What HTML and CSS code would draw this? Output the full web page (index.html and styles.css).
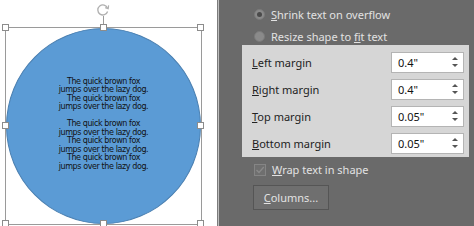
FILE: index.html
```html
<!DOCTYPE html>
<html lang="en">
<head>
  <meta charset="UTF-8">
  <title>Text box options</title>
  <link rel="stylesheet" href="styles.css">
</head>
<body>
  <div class="canvas">
    <div class="stage">
      <svg class="rotate" width="14" height="14" viewBox="0 0 14 14">
        <path d="M11.5 5.2 A5 5 0 1 0 11.6 8.5" fill="none" stroke="#b0b0b0" stroke-width="1.3"/>
        <path d="M9.2 4.6 L12.2 5.6 L12.6 2.4" fill="none" stroke="#b0b0b0" stroke-width="1.2"/>
      </svg>
      <div class="rotate-line"></div>
      <div class="frame"></div>
      <div class="shape">
        <div class="shape-text">
          <p>The quick brown fox<br>jumps over the lazy dog.<br>The quick brown fox<br>jumps over the lazy dog.</p>
          <p>The quick brown fox<br>jumps over the lazy dog.<br>The quick brown fox<br>jumps over the lazy dog.<br>The quick brown fox<br>jumps over the lazy dog.</p>
        </div>
      </div>
      <span class="handle h-tl"></span>
      <span class="handle h-tm"></span>
      <span class="handle h-tr"></span>
      <span class="handle h-ml"></span>
      <span class="handle h-mr"></span>
      <span class="handle h-bl"></span>
      <span class="handle h-bm"></span>
      <span class="handle h-br"></span>
    </div>
  </div>
  <div class="divider"></div>
  <div class="panel">
    <label class="option"><span class="radio checked"></span><span><u>S</u>hrink text on overflow</span></label>
    <label class="option"><span class="radio"></span><span>Resize shape to <u>f</u>it text</span></label>

    <div class="margins">
      <div class="row">
        <span><u>L</u>eft margin</span>
        <div class="spin"><span>0.4"</span><span class="arrows"><i class="up"></i><i class="down"></i></span></div>
      </div>
      <div class="row">
        <span><u>R</u>ight margin</span>
        <div class="spin"><span>0.4"</span><span class="arrows"><i class="up"></i><i class="down"></i></span></div>
      </div>
      <div class="row">
        <span><u>T</u>op margin</span>
        <div class="spin"><span>0.05"</span><span class="arrows"><i class="up"></i><i class="down"></i></span></div>
      </div>
      <div class="row">
        <span><u>B</u>ottom margin</span>
        <div class="spin"><span>0.05"</span><span class="arrows"><i class="up"></i><i class="down"></i></span></div>
      </div>
    </div>

    <label class="option check-row">
      <span class="checkbox">
        <svg width="10" height="10" viewBox="0 0 10 10"><path d="M1.5 5 L4 7.5 L8.8 2" fill="none" stroke="#8a8a8a" stroke-width="1.3"/></svg>
      </span>
      <span><u>W</u>rap text in shape</span>
    </label>

    <button class="columns"><u>C</u>olumns...</button>
  </div>
</body>
</html>
```

FILE: styles.css
```css
body {
  margin: 0;
  width: 474px;
  height: 226px;
  display: flex;
  overflow: hidden;
  font-family: "Segoe UI", "Noto Sans", sans-serif;
}
.canvas {
  width: 217px;
  background: #fff;
}
.stage {
  position: relative;
  width: 217px;
  height: 226px;
}
.rotate {
  position: absolute;
  left: 96px;
  top: 3px;
}
.rotate-line {
  position: absolute;
  left: 103px;
  top: 16px;
  width: 1px;
  height: 11px;
  background: #9a9a9a;
}
.frame {
  position: absolute;
  left: 5px;
  top: 27px;
  width: 195px;
  height: 196px;
  border: 1px solid #9a9a9a;
}
.shape {
  position: absolute;
  left: 6px;
  top: 28px;
  width: 193px;
  height: 194px;
  border: 1px solid #4a7fb0;
  border-radius: 50%;
  background: #5b9bd5;
  display: flex;
  align-items: center;
  justify-content: center;
}
.shape-text {
  font-family: "DejaVu Sans", sans-serif;
  font-size: 8px;
  line-height: 8.5px;
  letter-spacing: -0.4px;
  color: #111;
  text-align: center;
  margin-top: -3px;
}
.shape-text p {
  margin: 0 0 8.5px;
}
.shape-text p:last-child {
  margin: 0;
}
.handle {
  position: absolute;
  width: 5px;
  height: 5px;
  background: #fff;
  border: 1px solid #8c8c8c;
}
.h-tl { left: 2px; top: 24px; }
.h-tm { left: 100px; top: 24px; }
.h-tr { left: 197px; top: 24px; }
.h-ml { left: 2px; top: 122px; }
.h-mr { left: 197px; top: 122px; }
.h-bl { left: 2px; top: 220px; }
.h-bm { left: 100px; top: 220px; }
.h-br { left: 197px; top: 220px; }
.divider {
  width: 1px;
  background: #bdbdbd;
  border-left: 1px solid #7c7c7c;
}
.panel {
  flex: 1;
  background: #6a6a6a;
  color: #e2e2e2;
  font-size: 11px;
  padding: 6px 5px 0 23px;
  display: flex;
  flex-direction: column;
  align-items: flex-start;
}
.option {
  display: flex;
  align-items: center;
  gap: 6px;
  height: 17px;
  margin-left: 12px;
}
.option + .option {
  margin-top: 5px;
}
.radio {
  width: 11px;
  height: 11px;
  border-radius: 50%;
  border: 1px solid #7a7a7a;
  background: #8a8a8a;
  box-sizing: border-box;
  position: relative;
}
.radio.checked::after {
  content: "";
  position: absolute;
  left: 2px;
  top: 2px;
  width: 5px;
  height: 5px;
  border-radius: 50%;
  background: #4a4a4a;
}
.margins {
  align-self: stretch;
  background: #d6d6d6;
  color: #222;
  padding: 7px 5px 4px 10px;
  display: flex;
  flex-direction: column;
  gap: 7px;
}
.row {
  display: flex;
  align-items: center;
  justify-content: space-between;
  height: 20px;
}
.spin {
  box-sizing: border-box;
  width: 73px;
  height: 21px;
  background: #fff;
  border: 1px solid #b4b4b4;
  display: flex;
  align-items: center;
  justify-content: space-between;
  padding-left: 6px;
  color: #111;
}
.arrows {
  display: flex;
  flex-direction: column;
  gap: 4px;
  width: 14px;
  align-items: center;
  margin-right: 1px;
}
.arrows i {
  width: 0;
  height: 0;
  border-left: 3px solid transparent;
  border-right: 3px solid transparent;
}
.arrows .up { border-bottom: 3px solid #555; }
.arrows .down { border-top: 3px solid #555; }
.check-row {
  margin-top: 4px;
}
.checkbox {
  width: 12px;
  height: 12px;
  border: 1px solid #858585;
  background: #6f6f6f;
  box-sizing: border-box;
  display: flex;
  align-items: center;
  justify-content: center;
}
.columns {
  margin-top: 7px;
  margin-left: 11px;
  width: 76px;
  height: 25px;
  background: #6f6f6f;
  border: 1px solid #555;
  color: #e2e2e2;
  font-family: inherit;
  font-size: 11px;
  padding: 0;
}
```
